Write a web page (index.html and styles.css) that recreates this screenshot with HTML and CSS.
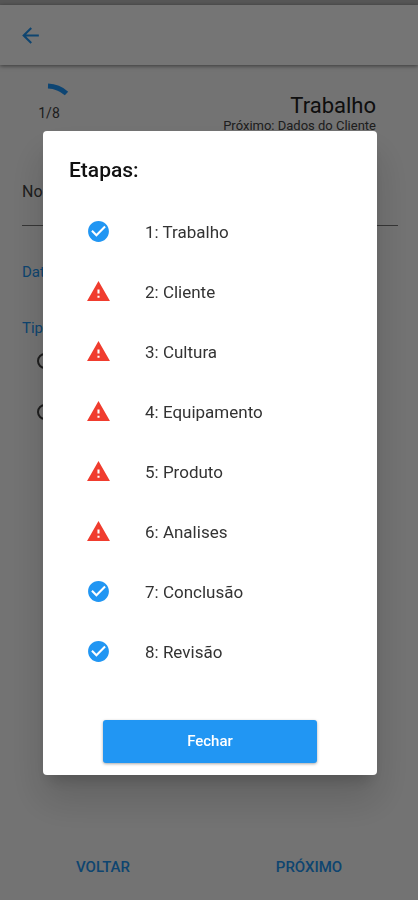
FILE: index.html
```html
<!DOCTYPE html>
<html lang="pt-BR">
<head>
<meta charset="utf-8">
<meta name="viewport" content="width=device-width, initial-scale=1">
<title>Trabalho</title>
<link rel="stylesheet" href="styles.css">
</head>
<body>
<svg class="sprite" aria-hidden="true">
  <symbol id="check" viewBox="0 0 24 24"><path d="M12 2C6.48 2 2 6.48 2 12s4.48 10 10 10 10-4.480 10-10S17.520 2 12 2zm-2 15l-5-5 1.410-1.410L10 14.170l7.590-7.590L19 8l-9 9z"/></symbol>
  <symbol id="warning" viewBox="0 0 24 24"><path d="M1 21h22L12 2 1 21zm12-3h-2v-2h2v2zm0-4h-2v-4h2v4z"/></symbol>
</svg>
<div class="page">
  <div class="status-bar"></div>
  <header class="app-bar">
    <button class="back" type="button" aria-label="Voltar">
      <svg viewBox="0 0 24 24"><path d="M20 11H7.830l5.590-5.590L12 4l-8 8 8 8 1.410-1.410L7.830 13H20v-2z"/></svg>
    </button>
  </header>
  <main class="content">
    <section class="step-head">
      <div class="progress">
        <svg class="arc" viewBox="0 0 60 24"><path d="M29 5A29 29 0 0 1 47.500 12.500"/></svg>
        <span>1/8</span>
      </div>
      <div class="step-text">
        <h1>Trabalho</h1>
        <p>Próximo: Dados do Cliente</p>
      </div>
    </section>
    <form class="form">
      <label class="name-label" for="name">No</label>
      <input class="name-field" id="name" type="text">
      <p class="group-label">Dat</p>
      <p class="group-label">Tip</p>
      <div class="radios">
        <input type="radio" name="type" aria-label="Tipo 1">
        <input type="radio" name="type" aria-label="Tipo 2">
      </div>
    </form>
  </main>
  <footer class="actions">
    <button type="button">VOLTAR</button>
    <button type="button">PRÓXIMO</button>
  </footer>
</div>
<div class="scrim">
  <section class="dialog" role="dialog" aria-modal="true" aria-labelledby="dialog-title">
    <h2 id="dialog-title">Etapas:</h2>
    <ul class="steps">
      <li><svg class="done"><use href="#check"/></svg>1: Trabalho</li>
      <li><svg class="alert"><use href="#warning"/></svg>2: Cliente</li>
      <li><svg class="alert"><use href="#warning"/></svg>3: Cultura</li>
      <li><svg class="alert"><use href="#warning"/></svg>4: Equipamento</li>
      <li><svg class="alert"><use href="#warning"/></svg>5: Produto</li>
      <li><svg class="alert"><use href="#warning"/></svg>6: Analises</li>
      <li><svg class="done"><use href="#check"/></svg>7: Conclusão</li>
      <li><svg class="done"><use href="#check"/></svg>8: Revisão</li>
    </ul>
    <button class="close" type="button">Fechar</button>
  </section>
</div>
</body>
</html>
```
FILE: styles.css
```css
* {
  box-sizing: border-box;
}

body {
  margin: 0;
  font-family: Roboto, sans-serif;
  color: #212121;
  background: #fafafa;
}

h1, h2, p, ul {
  margin: 0;
  padding: 0;
}

button {
  padding: 0;
  border: 0;
  background: none;
  font: inherit;
}

.sprite {
  position: absolute;
  width: 0;
  height: 0;
}

.page {
  display: flex;
  flex-direction: column;
  min-height: 100vh;
}

.status-bar {
  height: 5px;
  background: #bdbdbd;
}

.app-bar {
  display: flex;
  align-items: center;
  height: 60px;
  padding: 0 18px;
  background: #fff;
  box-shadow: 0 1px 4px rgba(0, 0, 0, 0.5);
}

.back {
  display: flex;
}

.back svg {
  width: 25px;
  height: 25px;
  fill: #2196f3;
}

.content {
  flex: 1;
  padding: 16px 20px 0 22px;
}

.step-head {
  display: flex;
  justify-content: space-between;
  padding: 0 22px 0 0;
}

.progress {
  display: flex;
  flex-direction: column;
  align-items: center;
  width: 54px;
  font-size: 14px;
  line-height: 16px;
  color: #424242;
}

.arc {
  width: 60px;
  height: 24px;
  fill: none;
  stroke: #1e96fa;
  stroke-width: 5;
}

.step-text {
  padding-top: 12px;
  text-align: right;
}

.step-text h1 {
  font-size: 22px;
  line-height: 26px;
  font-weight: 400;
}

.step-text p {
  font-size: 13px;
  line-height: 14px;
  color: #424242;
}

.form {
  display: flex;
  flex-direction: column;
  padding-top: 49px;
}

.name-label {
  font-size: 16px;
  line-height: 20px;
  color: #424242;
}

.name-field {
  height: 24px;
  margin-bottom: 36px;
  border: 0;
  border-bottom: 1px solid #757575;
  background: none;
}

.group-label {
  margin-bottom: 36px;
  font-size: 15px;
  line-height: 20px;
  color: #2196f3;
}

.radios {
  display: flex;
  flex-direction: column;
  gap: 35px;
  padding-left: 15px;
  margin-top: -21px;
}

.radios input {
  appearance: none;
  width: 16px;
  height: 16px;
  margin: 0;
  border: 2px solid #424242;
  border-radius: 50%;
}

.actions {
  display: grid;
  grid-template-columns: 1fr 1fr;
  padding: 0 6px 15px 0;
}

.actions button {
  height: 36px;
  font-size: 15px;
  font-weight: 500;
  color: #2196f3;
}

.scrim {
  position: fixed;
  inset: 0;
  display: flex;
  align-items: center;
  padding: 5px 41px 0 43px;
  background: rgba(0, 0, 0, 0.54);
}

.dialog {
  flex: 1;
  display: flex;
  flex-direction: column;
  padding: 26px 26px 12px;
  border-radius: 4px;
  background: #fff;
  box-shadow: 0 11px 15px -7px rgba(0, 0, 0, 0.2), 0 24px 38px 3px rgba(0, 0, 0, 0.14);
}

.dialog h2 {
  margin-bottom: 19px;
  font-size: 21px;
  line-height: 26px;
  font-weight: 500;
  color: #111;
}

.steps {
  list-style: none;
  margin-bottom: 38px;
}

.steps li {
  display: flex;
  align-items: center;
  gap: 34px;
  height: 60px;
  padding-left: 17px;
  font-size: 17px;
  color: #333;
}

.steps svg {
  width: 25px;
  height: 25px;
}

.done {
  fill: #2196f3;
}

.alert {
  fill: #f03c2e;
}

.close {
  align-self: center;
  width: 76%;
  height: 43px;
  border-radius: 3px;
  background: #2196f3;
  box-shadow: 0 1px 3px rgba(0, 0, 0, 0.35);
  font-size: 15px;
  font-weight: 500;
  color: #fff;
}
```
